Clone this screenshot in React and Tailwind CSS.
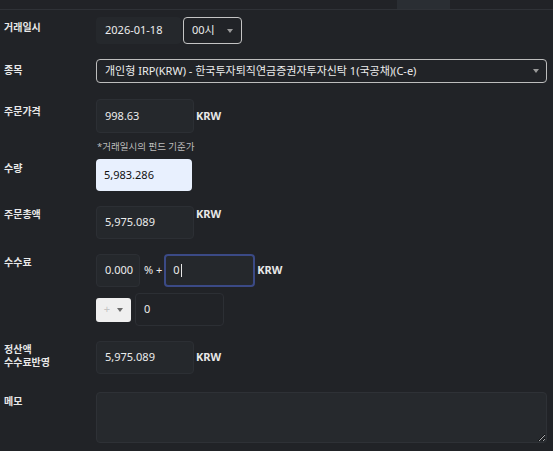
import React from "react";

const font = { fontFamily: '"Noto Sans", "Noto Sans CJK KR", sans-serif' };

function Arrow({ className = "" }) {
  return (
    <svg width="6" height="4" viewBox="0 0 6 4" className={className}>
      <path d="M0 0 L6 0 L3 4 Z" fill="currentColor" />
    </svg>
  );
}

function Label({ children, pt }) {
  return (
    <div
      className={`w-[96px] shrink-0 pl-[4px] text-[10px] font-bold leading-[14px] text-[#e8e8e8] ${pt}`}
    >
      {children}
    </div>
  );
}

function Box({ children, className = "" }) {
  return (
    <div
      className={`flex items-center rounded-[4px] border border-[#2c2f34] bg-[#25282c] pl-[8px] text-[11px] text-[#ececec] ${className}`}
    >
      {children}
    </div>
  );
}

function Krw() {
  return <span className="ml-[2px] text-[11px] font-bold text-[#e8e8e8]">KRW</span>;
}

export default function App() {
  return (
    <div className="h-[451px] w-[553px] overflow-hidden bg-[#212327]" style={font}>
      <div className="flex h-[10px] border-b border-[#2f3237]">
        <div className="ml-[397px] h-[9px] w-[53px] bg-[#2a2e33]" />
      </div>

      <div className="flex flex-col pt-[7px]">
        {/* 거래일시 */}
        <div className="flex h-[27px]">
          <Label pt="pt-[3px]">거래일시</Label>
          <Box className="h-[27px] w-[85px] border-transparent pl-[4px]">2026-01-18</Box>
          <div className="ml-[2px] flex h-[27px] w-[59px] items-center justify-between rounded-[4px] border border-[#c4c4c4] pl-[8px] pr-[8px] text-[11px] text-[#ececec]">
            <span>00시</span>
            <Arrow className="text-[#9a9a9a]" />
          </div>
        </div>

        {/* 종목 */}
        <div className="mt-[15px] flex h-[24px]">
          <Label pt="pt-[4px]">종목</Label>
          <div className="flex h-[24px] w-[451px] items-center justify-between rounded-[4px] border border-[#bdbdbd] pl-[8px] pr-[7px] text-[11px] text-[#ececec]">
            <span>개인형 IRP(KRW) - 한국투자퇴직연금증권자투자신탁 1(국공채)(C-e)</span>
            <Arrow className="text-[#9a9a9a]" />
          </div>
        </div>

        {/* 주문가격 */}
        <div className="mt-[16px] flex">
          <Label pt="pt-[5px]">주문가격</Label>
          <div className="flex flex-col">
            <div className="flex items-center">
              <Box className="h-[34px] w-[98px]">998.63</Box>
              <Krw />
            </div>
            <div className="mt-[8px] pl-[1px] text-[9.5px] leading-[12px] text-[#bdbdbd]">
              *거래일시의 펀드 기준가
            </div>
          </div>
        </div>

        {/* 수량 */}
        <div className="mt-[6px] flex h-[32px]">
          <Label pt="pt-[2px]">수량</Label>
          <div className="flex h-[32px] w-[96px] items-center rounded-[4px] bg-[#e8f0fe] pl-[8px] text-[11px] text-[#111]">
            5,983.286
          </div>
        </div>

        {/* 주문총액 */}
        <div className="mt-[15px] flex h-[33px]">
          <Label pt="pt-[1px]">주문총액</Label>
          <Box className="h-[33px] w-[98px]">5,975.089</Box>
          <Krw />
        </div>

        {/* 수수료 */}
        <div className="mt-[15px] flex h-[33px] items-center">
          <Label pt="pt-[1px] self-start">수수료</Label>
          <Box className="h-[33px] w-[44px]">0.000</Box>
          <span className="ml-[4px] text-[11px] text-[#ececec]">% +</span>
          <div className="ml-[2px] flex h-[33px] w-[91px] items-center rounded-[4px] border-2 border-[#3b4a86] bg-[#25282c] pl-[7px] text-[11px] text-[#ececec]">
            <span>0</span>
            <span className="ml-[1px] h-[13px] w-[1px] bg-[#e6e6e6]" />
          </div>
          <Krw />
        </div>

        <div className="mt-[6px] flex h-[33px] items-center">
          <div className="w-[96px] shrink-0" />
          <div className="flex h-[24px] w-[35px] items-center justify-center gap-[7px] rounded-[3px] bg-[#efefef] text-[11px] text-[#c4c4c4]">
            <span>+</span>
            <Arrow className="text-[#6b6b6b]" />
          </div>
          <Box className="ml-[4px] h-[33px] w-[89px] bg-[#212327]">0</Box>
        </div>

        {/* 정산액 */}
        <div className="mt-[15px] flex h-[33px] items-center">
          <div className="w-[96px] shrink-0 self-start pl-[4px] pt-[2px] text-[10px] font-bold leading-[13px] text-[#e8e8e8]">
            정산액
            <br />
            수수료반영
          </div>
          <Box className="h-[33px] w-[98px]">5,975.089</Box>
          <Krw />
        </div>

        {/* 메모 */}
        <div className="mt-[18px] flex">
          <Label pt="pt-[2px]">메모</Label>
          <textarea
            className="h-[51px] w-[451px] rounded-[4px] border border-[#2e3136] bg-[#26292d] text-[11px] text-[#e6e6e6] outline-none"
            defaultValue=""
          />
        </div>
      </div>
    </div>
  );
}
